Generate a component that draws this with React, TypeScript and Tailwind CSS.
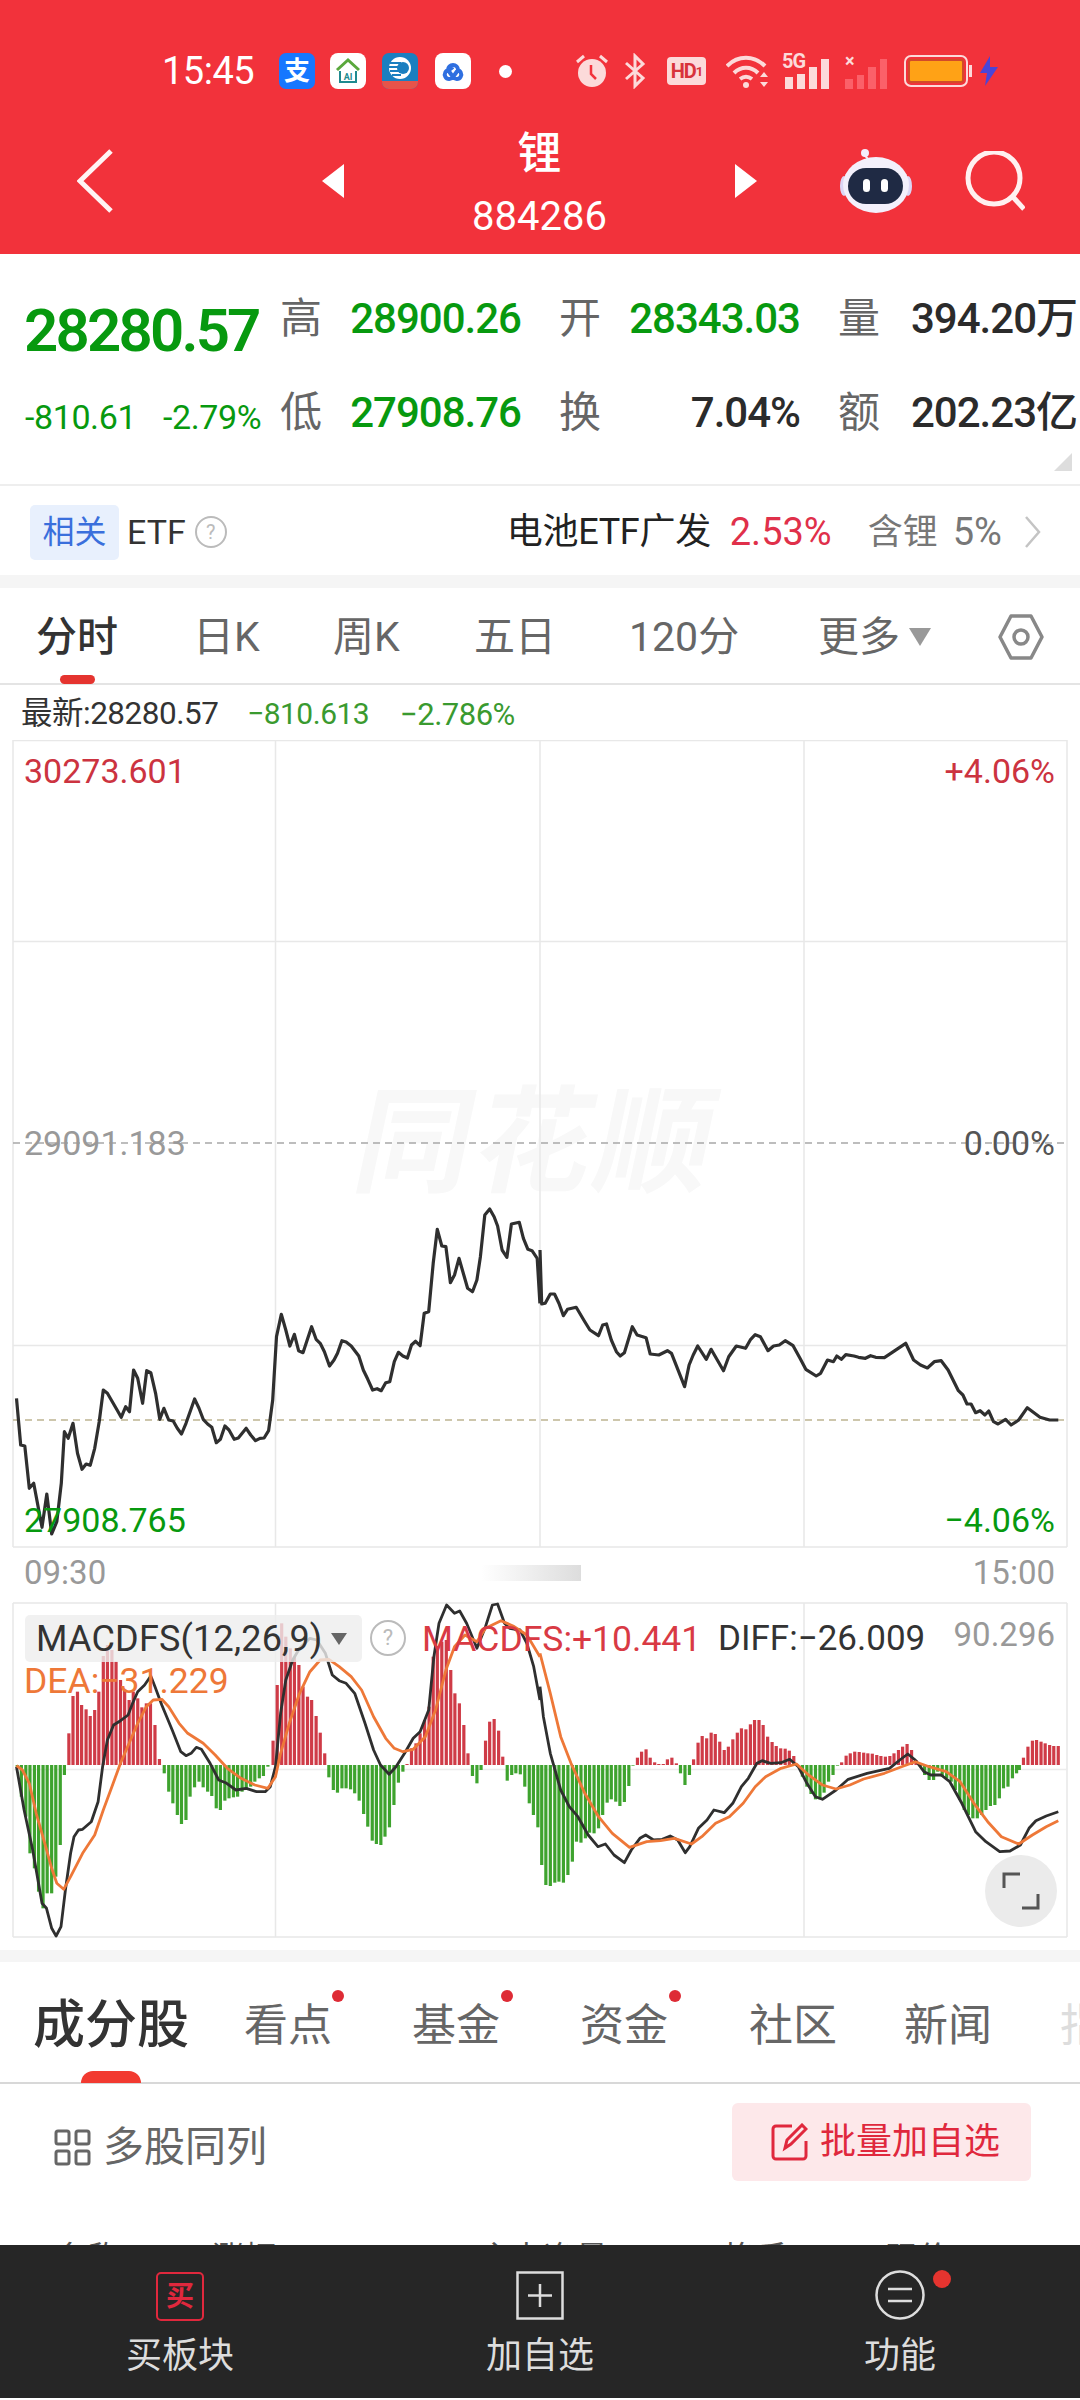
import React from "react";

const RED = "#f2323b";

// traced from the reference, in crop coordinates (x scale 2.904, y scale 3)
const priceA = [48,895,60,1035,72,1038,85,1165,98,1150,122,1282,136,1182,150,1302,165,1265,178,1150,187,995,198,1015,212,970,225,1060,238,1108,250,1092,262,1096,275,1045,288,965,300,870,312,880,340,930,352,952,365,920,376,935,388,810,400,835,414,910,426,812,438,818,452,880,464,958,476,925,490,960,503,963,515,985,527,1002,540,970,565,897,578,925,590,958,603,972,615,982,628,1028,640,1018,653,978,665,990,680,1018,692,1014,715,985,728,1005,742,1022,755,1015,767,1014,780,992,792,900,803,710,817,643,830,690,842,738,855,703,867,752,880,758,892,720,905,680,918,718,930,730,942,755,957,798,970,780,980,760,993,722,1005,726,1020,738,1042,768,1055,810,1068,838,1082,870,1095,866,1107,872,1120,848,1132,845,1145,785,1157,757,1170,768,1183,774,1195,735,1207,724,1220,737,1232,640,1245,635,1258,490,1270,388,1283,438,1295,440,1308,548,1320,525,1333,475,1347,525,1358,565,1372,575,1385,540,1395,470,1408,345,1422,327,1435,350,1445,378,1458,450,1472,472,1485,372,1508,367,1520,415,1533,448,1545,452,1560,475,1568,610];
const priceB = [5,612,15,610,30,582,42,582,55,610,68,647,80,628,105,622,130,665,145,690,170,707,182,675,193,672,207,720,222,755,233,768,245,758,268,680,282,705,308,713,320,762,345,765,370,752,382,760,420,860,433,795,445,765,458,738,483,778,497,748,533,812,548,770,570,738,597,745,612,718,625,704,640,710,662,752,678,738,695,735,712,722,735,737,755,775,772,808,802,828,815,820,835,780,852,785,862,768,875,778,888,764,912,768,925,772,945,775,960,767,975,772,1000,773,1062,730,1085,780,1105,795,1125,804,1145,785,1165,782,1185,810,1215,872,1228,885,1240,912,1252,912,1265,938,1278,932,1292,945,1303,933,1317,965,1330,972,1352,958,1368,975,1390,960,1415,923,1452,952,1480,960,1505,960];

const diffA = [48,530,70,660,95,780,122,940,135,955,150,1015,163,1038,177,1010,190,900,205,790,215,740,228,720,240,718,265,695,285,635,298,530,312,450,330,405,350,392,372,375,385,340,400,305,420,285,438,258,450,290,470,345,500,420,525,485,540,497,555,490,570,472,585,478,610,520,635,570,655,578,685,600,715,595,745,605,770,605,785,590,800,530,815,370,830,270,850,210,870,175,900,145,920,150,945,190,965,255,985,272,1005,280,1030,310,1060,400,1085,480,1105,525,1130,553,1150,530,1175,490,1200,445,1220,425,1245,360,1260,200,1275,100,1297,45,1320,70,1335,63,1355,100,1385,175,1410,110,1430,45,1445,42,1465,100,1480,115,1510,120,1530,160,1550,230,1568,330];
const diffB = [10,380,30,490,60,600,85,650,110,680,140,735,168,770,190,762,215,795,245,818,265,780,290,745,307,735,330,750,355,748,378,738,400,750,422,788,435,770,460,715,485,690,505,660,535,668,560,640,585,590,605,565,630,520,645,512,670,520,700,518,725,508,750,530,775,580,800,620,820,628,860,600,895,568,950,550,985,542,1015,535,1045,510,1068,492,1090,510,1115,545,1135,555,1165,555,1190,575,1225,640,1265,725,1295,755,1335,785,1365,783,1395,765,1420,715,1440,692,1470,678,1505,665];
const deaA = [48,527,65,540,85,580,105,670,130,760,150,835,165,880,185,898,205,860,240,790,275,735,300,660,325,590,350,520,375,460,400,400,425,350,445,330,470,328,490,350,520,400,545,430,590,460,625,495,660,535,700,565,740,585,778,595,800,560,815,490,840,400,870,310,900,245,930,210,955,208,985,230,1020,260,1050,300,1085,380,1120,445,1145,475,1170,485,1200,478,1235,440,1265,360,1295,240,1320,170,1350,135,1385,155,1410,115,1455,92,1490,108,1530,135,1568,200];
const deaB = [30,310,60,440,90,520,130,610,170,680,210,730,260,772,310,755,350,752,390,745,440,762,470,740,510,700,550,680,590,640,625,590,655,560,700,535,745,522,780,555,820,585,860,597,900,585,940,567,1000,550,1050,530,1090,515,1130,530,1180,545,1220,575,1260,640,1300,695,1340,740,1390,762,1430,735,1470,710,1505,692];

const barsA = [50,530,62,620,75,680,87,790,100,835,112,905,125,955,137,910,150,910,162,860,175,765,187,555,200,430,212,318,225,305,237,345,250,358,262,378,275,360,287,305,300,198,312,165,325,180,337,215,350,270,362,298,375,330,387,305,400,325,412,352,425,340,437,340,450,405,463,507,477,550,490,605,502,640,515,675,527,702,540,690,552,620,565,592,578,575,590,592,603,605,615,618,628,655,640,660,653,632,665,625,678,622,690,620,703,605,715,595,728,590,740,575,753,565,765,558,778,530,793,452,805,285,818,100,830,140,843,175,855,200,868,225,880,290,893,320,905,330,918,378,930,428,943,490,955,562,968,600,980,608,993,595,1005,595,1018,598,1030,610,1043,632,1056,672,1068,710,1081,752,1093,762,1106,765,1118,740,1131,712,1144,645,1157,578,1170,545,1182,522,1195,475,1208,460,1220,430,1233,390,1246,350,1258,200,1270,170,1283,155,1296,150,1309,240,1321,310,1334,340,1347,405,1359,490,1372,558,1385,580,1397,540,1410,452,1422,395,1435,387,1448,422,1460,500,1473,572,1486,555,1498,550,1511,553,1524,590,1537,640,1549,675,1562,712];
const barsB = [5,825,17,885,30,888,43,878,55,875,68,878,81,855,94,815,106,755,119,758,132,745,144,728,157,730,170,715,182,675,195,638,207,628,220,635,232,648,245,636,258,588,270,527,283,503,295,485,308,478,320,503,333,517,345,522,358,522,370,508,383,503,396,520,408,550,421,585,434,555,446,508,459,458,471,438,484,445,497,428,509,432,522,455,535,480,547,470,560,448,573,428,585,415,598,418,611,403,623,390,636,390,648,405,661,440,674,456,686,468,699,475,712,476,724,482,737,498,762,560,775,590,787,612,800,628,813,628,825,608,838,575,851,555,864,527,876,517,889,497,901,490,914,485,927,486,940,488,952,490,965,491,978,495,990,498,1003,500,1016,498,1028,490,1041,480,1053,470,1066,462,1079,480,1092,510,1105,530,1117,555,1130,570,1143,570,1155,545,1168,560,1181,565,1194,575,1206,600,1219,630,1232,660,1244,675,1257,685,1270,685,1283,675,1295,660,1308,648,1321,645,1334,625,1346,595,1359,590,1372,565,1384,550,1392,540,1404,503,1417,470,1430,452,1442,450,1455,455,1467,460,1480,465,1492,468,1505,468];

const toPoints = (a: number[], ox: number, oy: number) => {
  const out: string[] = [];
  for (let i = 0; i < a.length; i += 2) {
    out.push(`${(ox + a[i] / 2.904).toFixed(1)},${(oy + a[i + 1] / 3).toFixed(1)}`);
  }
  return out.join(" ");
};

const toBars = (a: number[], ox: number) => {
  const out: { x: number; y: number; h: number; up: boolean }[] = [];
  for (let i = 0; i < a.length; i += 2) {
    const up = a[i + 1] < 525;
    const h = Math.abs(a[i + 1] - 525) / 3;
    out.push({ x: ox + a[i] / 2.904 - 1.6, y: up ? 1590 + a[i + 1] / 3 : 1765, h, up });
  }
  return out;
};

const bars = [...toBars(barsA, 0), ...toBars(barsB, 540)];

const StatusBar = () => (
  <div className="flex h-[36px] items-center pl-[162px] text-white">
    <span className="w-[117px] text-[38px] leading-none tracking-[-0.5px]">15:45</span>
    <div className="flex h-[36px] w-[36px] items-center justify-center rounded-[7px] bg-[#1677ff] text-[26px] leading-none font-bold">支</div>
    <div className="ml-[15px] flex h-[36px] w-[36px] items-center justify-center rounded-[8px] bg-white">
      <svg width="28" height="28" viewBox="0 0 28 28" fill="none">
        <path d="M3 13 14 3l11 10" stroke="#5aa83c" strokeWidth="3" />
        <path d="M6 14v11h16V14" stroke="#1f8a8f" strokeWidth="2" />
        <text x="14" y="23" textAnchor="middle" fontSize="9" fontWeight="700" fill="#1f8a8f">AI</text>
      </svg>
    </div>
    <div className="ml-[16px] flex h-[36px] w-[36px] flex-col items-center justify-start overflow-hidden rounded-[7px] bg-[#1b7fc0]">
      <svg width="26" height="26" viewBox="0 0 26 26" className="mt-[2px]">
        <circle cx="13" cy="13" r="11" fill="#fff" />
        <path d="M3 8h11M2 12h12M3 16h11M5 20h9" stroke="#1b7fc0" strokeWidth="2" />
        <circle cx="16" cy="13" r="6" fill="#1b7fc0" />
      </svg>
      <div className="h-[8px] w-full bg-[#e8534a]" />
    </div>
    <div className="ml-[17px] flex h-[36px] w-[36px] items-center justify-center rounded-[8px] bg-white">
      <svg width="30" height="22" viewBox="0 0 30 22" fill="none" stroke="#2f6fe0" strokeWidth="4">
        <path d="M15 5a5 5 0 0 1 5 5l-5 7a4.500 4.500 0 1 1-4-7l4-3M15 5a5 5 0 0 0-5 5l5 7a4.500 4.500 0 1 0 4-7" />
      </svg>
    </div>
    <div className="ml-[28px] h-[13px] w-[13px] rounded-full bg-white" />

    <svg width="36" height="36" viewBox="0 0 36 36" className="ml-[62px]" fill="#fcdada">
      <path d="M3 9 10 3M33 9 26 3" stroke="#fcdada" strokeWidth="3" />
      <circle cx="18" cy="20" r="14" />
      <path d="M17 12v9l5 5" stroke={RED} strokeWidth="2.500" fill="none" />
    </svg>
    <svg width="24" height="36" viewBox="0 0 24 36" className="ml-[13px]" fill="none" stroke="#fcdada" strokeWidth="3">
      <path d="M3 10 20 25l-8 8V3l8 8L3 26" />
    </svg>
    <div className="ml-[20px] flex h-[28px] w-[39px] items-center justify-center rounded-[4px] bg-[#fcdada] text-[20px] leading-none font-bold tracking-[-1px] text-[#d8333b]">HD<span className="text-[13px]">1</span></div>
    <svg width="42" height="36" viewBox="0 0 42 36" className="ml-[20px]" fill="none" stroke="#fcdada" strokeWidth="4">
      <path d="M1 13c11-11 27-11 38 0M8 20c7-7 17-7 24 0M14 26c4-3 8-3 12 0" />
      <circle cx="20" cy="32" r="3" fill="#fcdada" stroke="none" />
      <path d="M34 24l4-5 4 5zM34 29l4 5 4-5z" fill="#fcdada" stroke="none" />
    </svg>
    <div className="relative ml-[14px] flex h-[36px] w-[47px] items-end gap-[4px] pl-[3px]">
      <span className="absolute -top-[2px] left-0 text-[20px] leading-none font-bold tracking-[-1px] text-[#fcdada]">5G</span>
      <div className="h-[12px] w-[8px] bg-[#fcdada]" />
      <div className="h-[15px] w-[8px] bg-[#fcdada]" />
      <div className="h-[22px] w-[8px] bg-[#fcdada]" />
      <div className="h-[30px] w-[8px] bg-[#fcdada]" />
    </div>
    <div className="relative ml-[16px] flex h-[36px] w-[42px] items-end gap-[4px]">
      <span className="absolute -top-[1px] left-[0px] text-[18px] leading-none font-bold text-[#fcdada]">×</span>
      <div className="h-[10px] w-[8px] bg-[#fb6069]" />
      <div className="h-[14px] w-[8px] bg-[#fb6069]" />
      <div className="h-[22px] w-[8px] bg-[#fb6069]" />
      <div className="h-[30px] w-[8px] bg-[#fb6069]" />
    </div>
    <div className="ml-[17px] flex items-center">
      <div className="h-[32px] w-[64px] rounded-[7px] border-[2px] border-[#fcdada] p-[2px]">
        <div className="h-full w-full rounded-[3px] border-[2px] border-[#d24a2a] bg-[#ffa216]" />
      </div>
      <div className="ml-[1px] h-[12px] w-[3px] bg-[#fcdada]" />
    </div>
    <svg width="20" height="32" viewBox="0 0 20 32" className="ml-[7px]" fill="#4a45d8">
      <path d="M11 1 1 18h7l-2 13L19 12h-8z" />
    </svg>
  </div>
);

const NavRow = () => (
  <div className="mt-[36px] flex h-[112px] items-center text-white">
    <svg width="36" height="64" viewBox="0 0 36 64" className="ml-[77px]" fill="none" stroke="#fff4f4" strokeWidth="5">
      <path d="M34 2 3 32l31 30" />
    </svg>
    <svg width="22" height="34" viewBox="0 0 22 34" className="ml-[209px]" fill="#fff">
      <path d="M22 0v34L0 17z" />
    </svg>
    <div className="flex w-[391px] flex-col items-center pt-[4px]">
      <span className="text-[44px] leading-[50px] font-medium">锂</span>
      <span className="mt-[17px] text-[40px] leading-[42px]">884286</span>
    </div>
    <svg width="22" height="34" viewBox="0 0 22 34" fill="#fff">
      <path d="M0 0v34l22-17z" />
    </svg>
    <svg width="72" height="66" viewBox="0 0 72 66" className="ml-[83px]">
      <path d="M30 14c-2-5-6-5-6-9" stroke="#f4ecfa" strokeWidth="2" fill="none" />
      <circle cx="25" cy="5" r="4" fill="#f4ecfa" />
      <ellipse cx="4" cy="38" rx="4" ry="10" fill="#dcd6f4" />
      <ellipse cx="68" cy="38" rx="4" ry="10" fill="#dcd6f4" />
      <ellipse cx="36" cy="37" rx="33" ry="28" fill="#f3f0fb" />
      <rect x="8" y="20" width="55" height="36" rx="18" fill="#1f2a44" />
      <rect x="23" y="31" width="7" height="13" rx="3.500" fill="#fff" />
      <rect x="41" y="31" width="7" height="13" rx="3.500" fill="#fff" />
    </svg>
    <svg width="60" height="60" viewBox="0 0 60 60" className="ml-[53px]" fill="none" stroke="#fff0f0" strokeWidth="5">
      <circle cx="29" cy="27" r="26" />
      <path d="M48 46l11 12" />
    </svg>
  </div>
);

const Cell = ({ label, value, cls, wide }: { label: string; value: string; cls: string; wide?: boolean }) => (
  <div className={wide ? "flex w-[241px] items-center" : "flex w-[279px] items-center"}>
    <span className="w-[42px] shrink-0 text-[42px] leading-none text-[#666666]">{label}</span>
    {wide ? (
      <span className={`ml-[31px] text-[42px] leading-none tracking-[-1px] whitespace-nowrap font-medium ${cls}`}>{value}</span>
    ) : (
      <span className={`w-[199px] shrink-0 text-right text-[42px] leading-none tracking-[-1px] font-medium ${cls}`}>{value}</span>
    )}
  </div>
);

const Quote = () => (
  <div className="relative flex h-[232px] border-b-2 border-[#eeeeee] bg-white">
    <div className="w-[280px] shrink-0 pt-[46px] pl-[24px]">
      <div className="text-[60px] leading-[62px] font-semibold tracking-[-2.800px] text-[#07990f]">28280.57</div>
      <div className="mt-[37px] flex pl-[1px] text-[34px] leading-[36px] tracking-[-0.4px] text-[#07990f]">
        <span className="w-[138px]">-810.61</span>
        <span>-2.79%</span>
      </div>
    </div>
    <div className="pt-[18px]">
      <div className="flex h-[94px] items-center">
        <Cell label="高" value="28900.26" cls="text-[#07990f]" />
        <Cell label="开" value="28343.03" cls="text-[#07990f]" />
        <Cell label="量" value="394.20万" cls="text-[#2b2b2b]" wide />
      </div>
      <div className="flex h-[94px] items-center">
        <Cell label="低" value="27908.76" cls="text-[#07990f]" />
        <Cell label="换" value="7.04%" cls="text-[#2b2b2b]" />
        <Cell label="额" value="202.23亿" cls="text-[#2b2b2b]" wide />
      </div>
    </div>
    <svg width="18" height="18" viewBox="0 0 18 18" className="absolute top-[199px] right-[8px]" fill="#dddddd">
      <path d="M18 0v18H0z" />
    </svg>
  </div>
);

const EtfRow = () => (
  <div className="flex h-[89px] items-center bg-white pt-[3px]">
    <span className="ml-[30px] flex h-[55px] w-[89px] items-center justify-center rounded-[5px] bg-[#e8f0fd] text-[32px] leading-none text-[#3a6fdc]">相关</span>
    <span className="ml-[8px] text-[34px] leading-none text-[#333333]">ETF</span>
    <span className="ml-[9px] flex h-[32px] w-[32px] items-center justify-center rounded-full border-2 border-[#bbbbbb] text-[20px] leading-none text-[#bbbbbb]">?</span>
    <span className="ml-[280px] w-[223px] shrink-0 text-[36px] leading-none tracking-[-0.3px] whitespace-nowrap text-[#222222]">电池ETF广发</span>
    <span className="w-[138px] shrink-0 text-[38px] leading-none text-[#e0304a]">2.53%</span>
    <span className="w-[85px] shrink-0 text-[35px] leading-none text-[#777777]">含锂</span>
    <span className="w-[71px] shrink-0 text-[38px] leading-none text-[#777777]">5%</span>
    <svg width="17" height="34" viewBox="0 0 17 34" fill="none" stroke="#c4c4c4" strokeWidth="2.500">
      <path d="M2 2l13 15L2 32" />
    </svg>
  </div>
);

const PeriodTabs = () => (
  <div className="relative flex h-[97px] items-center border-b-2 border-[#e4e4e4] bg-white pt-[3px] pl-[36px] text-[41px] leading-none text-[#666666]">
    <span className="w-[157px] shrink-0 text-[41px] font-medium text-[#333333]">分时</span>
    <span className="w-[140px] shrink-0">日K</span>
    <span className="w-[141px] shrink-0">周K</span>
    <span className="w-[155px] shrink-0">五日</span>
    <span className="w-[189px] shrink-0">120分</span>
    <span className="w-[91px] shrink-0">更多</span>
    <svg width="22" height="18" viewBox="0 0 22 18" fill="#999999">
      <path d="M0 0h22L11 18z" />
    </svg>
    <svg width="48" height="48" viewBox="0 0 48 48" className="ml-[66px]" fill="none" stroke="#888888" strokeWidth="3.500">
      <path d="M14 3h20l11 21-11 21H14L3 24z" strokeLinejoin="round" />
      <circle cx="24" cy="24" r="7" />
    </svg>
    <div className="absolute bottom-[-1px] left-[60px] h-[9px] w-[35px] rounded-full bg-[#e5342f]" />
  </div>
);

const PriceChart = () => (
  <div className="relative h-[808px] bg-white">
    <div className="absolute top-[338px] left-[358px] -skew-x-12 text-[116px] leading-[130px] font-bold tracking-[4px] whitespace-nowrap text-[#f8f8f8]">同花顺</div>
    <svg viewBox="0 740 1080 808" className="absolute inset-0 h-full w-full" fill="none">
      <path d="M13 740.500H1067M13 941.500H1067M13 1345.500H1067M13 1547H1067M13 740V1547M1067 740V1547M275.500 740V1547M540 740V1547M804 740V1547" stroke="#e8e8e8" strokeWidth="1.500" />
      <path d="M13 1143H1067" stroke="#a8a8a8" strokeWidth="1.500" strokeDasharray="7 5" />
      <path d="M13 1420H1067" stroke="#bdb491" strokeWidth="1.500" strokeDasharray="7 5" />
      <polyline points={toPoints(priceA, 0, 1100)} stroke="#2f2f2f" strokeWidth="3.200" strokeLinejoin="round" />
      <polyline points={toPoints([0, 450, ...priceB], 540, 1100)} stroke="#2f2f2f" strokeWidth="3.200" strokeLinejoin="round" />
    </svg>
    <span className="absolute top-[11px] left-[24px] text-[34px] leading-[40px] text-[#cc3340]">30273.601</span>
    <span className="absolute top-[11px] right-[25px] text-[34px] leading-[40px] text-[#cc3340]">+4.06%</span>
    <span className="absolute top-[383px] left-[24px] text-[34px] leading-[40px] text-[#999999]">29091.183</span>
    <span className="absolute top-[383px] right-[25px] text-[34px] leading-[40px] text-[#555555]">0.00%</span>
    <span className="absolute top-[760px] left-[24px] text-[34px] leading-[40px] text-[#07990f]">27908.765</span>
    <span className="absolute top-[760px] right-[25px] text-[34px] leading-[40px] text-[#07990f]">−4.06%</span>
  </div>
);

const MacdChart = () => (
  <div className="relative h-[336px] bg-white">
    <svg viewBox="0 1602 1080 336" className="absolute inset-0 h-full w-full" fill="none">
      <path d="M13 1603H1067M13 1937H1067M13 1603V1937M1067 1603V1937M275.500 1603V1937M804 1603V1937" stroke="#e8e8e8" strokeWidth="1.500" />
      <path d="M13 1769.500H1067" stroke="#ececec" strokeWidth="1.500" />
      {bars.map((b, i) => (
        <rect key={i} x={b.x} y={b.y} width="3.200" height={b.h} fill={b.up ? "#cf3b47" : "#3ea32e"} />
      ))}
      <polyline points={toPoints(diffA, 0, 1590)} stroke="#2f2f2f" strokeWidth="2.800" strokeLinejoin="round" />
      <polyline points={toPoints([0, 290, ...diffB], 540, 1590)} stroke="#2f2f2f" strokeWidth="2.800" strokeLinejoin="round" />
      <polyline points={toPoints(deaA, 0, 1590)} stroke="#ee7838" strokeWidth="2.800" strokeLinejoin="round" />
      <polyline points={toPoints([0, 190, ...deaB], 540, 1590)} stroke="#ee7838" strokeWidth="2.800" strokeLinejoin="round" />
    </svg>
    <div className="absolute top-[13px] left-[25px] flex h-[47px] w-[337px] items-center rounded-[5px] bg-[#eeeeee]/80 pl-[11px] text-[36px] leading-none text-[#333333]">
      <span className="w-[295px] shrink-0 tracking-[0.2px] whitespace-nowrap">MACDFS(12,26,9)</span>
      <svg width="16" height="12" viewBox="0 0 16 12" fill="#666666">
        <path d="M0 0h16L8 12z" />
      </svg>
    </div>
    <span className="absolute top-[18px] left-[370px] flex h-[36px] w-[36px] items-center justify-center rounded-full border-2 border-[#bbbbbb] text-[22px] leading-none text-[#bbbbbb]">?</span>
    <span className="absolute top-[17px] left-[422px] text-[35.500px] leading-[40px] text-[#d93a44]">MACDFS:+10.441</span>
    <span className="absolute top-[17px] left-[718px] text-[35px] leading-[40px] text-[#333333]">DIFF:−26.009</span>
    <span className="absolute top-[13px] right-[25px] text-[33px] leading-[40px] text-[#999999]">90.296</span>
    <span className="absolute top-[59px] left-[24px] text-[35.500px] leading-[40px] text-[#ee7838]">DEA:−31.229</span>
    <div className="absolute top-[253px] left-[985px] flex h-[72px] w-[72px] items-center justify-center rounded-full bg-[#ebebeb]">
      <svg width="38" height="38" viewBox="0 0 38 38" fill="none" stroke="#555555" strokeWidth="3">
        <path d="M2 16V2h16M36 22v14H20" />
      </svg>
    </div>
  </div>
);

const SectionTabs = () => (
  <div className="relative flex h-[122px] items-center border-b-2 border-[#d8d8d8] bg-white pt-[7px] pl-[33px] text-[44px] leading-none text-[#666666]">
    <span className="w-[211px] shrink-0 text-[52px] font-medium text-[#333333]">成分股</span>
    <span className="relative w-[168px] shrink-0">看点<span className="absolute -top-[14px] left-[88px] h-[12px] w-[12px] rounded-full bg-[#de2b35]" /></span>
    <span className="relative w-[168px] shrink-0">基金<span className="absolute -top-[14px] left-[89px] h-[12px] w-[12px] rounded-full bg-[#de2b35]" /></span>
    <span className="relative w-[169px] shrink-0">资金<span className="absolute -top-[14px] left-[89px] h-[12px] w-[12px] rounded-full bg-[#de2b35]" /></span>
    <span className="w-[155px] shrink-0">社区</span>
    <span className="w-[156px] shrink-0">新闻</span>
    <span className="shrink-0 text-[#dddddd]">指数</span>
    <div className="absolute bottom-[-1px] left-[81px] h-[12px] w-[60px] rounded-t-full rounded-b-[4px] bg-[#f23a30]" />
  </div>
);

const ListHead = () => (
  <div className="h-[161px] overflow-hidden bg-white">
    <div className="flex h-[115px] items-center pl-[54px]">
      <svg width="37" height="37" viewBox="0 0 37 37" className="mt-[11px]" fill="none" stroke="#666666" strokeWidth="3">
        <rect x="2" y="2" width="13" height="13" rx="2" />
        <rect x="22" y="2" width="13" height="13" rx="2" />
        <rect x="2" y="22" width="13" height="13" rx="2" />
        <rect x="22" y="22" width="13" height="13" rx="2" />
      </svg>
      <span className="mt-[11px] ml-[12px] w-[629px] shrink-0 text-[41px] leading-none text-[#666666]">多股同列</span>
      <div className="flex h-[78px] w-[299px] items-center rounded-[6px] bg-[#fde8ea] pl-[39px] text-[36px] leading-none text-[#e0283d]">
        <svg width="37" height="38" viewBox="0 0 37 38" fill="none" stroke="#e0283d" strokeWidth="3">
          <path d="M21 3H5a3 3 0 0 0-3 3v27a3 3 0 0 0 3 3h27a3 3 0 0 0 3-3V18" />
          <path d="M14 25l2-8L31 2l4 4-15 15z" />
        </svg>
        <span className="ml-[12px]">批量加自选</span>
      </div>
    </div>
    <div className="mt-[43px] flex pl-[56px] text-[32px] leading-none text-[#555555]">
      <span className="w-[156px] shrink-0">名称</span>
      <span className="w-[268px] shrink-0">涨幅</span>
      <span className="w-[244px] shrink-0">主力净量</span>
      <span className="w-[162px] shrink-0">换手</span>
      <span className="shrink-0">现价</span>
    </div>
  </div>
);

const BottomBar = () => (
  <div className="flex h-[153px] bg-[#262626]">
    <div className="flex w-[360px] flex-col items-center pt-[27px]">
      <div className="flex h-[49px] w-[48px] items-center justify-center rounded-[5px] border-2 border-[#e0283d] text-[28px] leading-none font-bold text-[#e0283d]">买</div>
      <span className="mt-[15px] text-[36px] leading-[40px] text-[#dddddd]">买板块</span>
    </div>
    <div className="flex w-[360px] flex-col items-center pt-[26px]">
      <svg width="48" height="49" viewBox="0 0 48 49" fill="none" stroke="#dddddd" strokeWidth="2.500">
        <rect x="1.500" y="1.500" width="45" height="46" />
        <path d="M24 13v23M12 24.500h24" />
      </svg>
      <span className="mt-[16px] text-[36px] leading-[40px] text-[#dddddd]">加自选</span>
    </div>
    <div className="relative flex w-[360px] flex-col items-center pt-[25px]">
      <svg width="50" height="50" viewBox="0 0 50 50" fill="none" stroke="#dddddd" strokeWidth="2.500">
        <circle cx="25" cy="25" r="23.500" />
        <path d="M13 19h24M13 31h24" />
      </svg>
      <span className="mt-[16px] text-[36px] leading-[40px] text-[#dddddd]">功能</span>
      <div className="absolute top-[25px] left-[213px] h-[18px] w-[18px] rounded-full bg-[#e5342f]" />
    </div>
  </div>
);

export default function App() {
  return (
    <div className="h-[2400px] w-[1080px] overflow-hidden bg-white font-['Roboto','Noto_Sans_CJK_SC',sans-serif]">
      <div className="h-[254px] bg-[#f2323b] pt-[53px]">
        <StatusBar />
        <NavRow />
      </div>
      <Quote />
      <EtfRow />
      <div className="h-[13px] bg-[#f5f5f5]" />
      <PeriodTabs />
      <div className="flex h-[55px] items-center bg-white pt-[3px] pl-[21px] leading-none">
        <span className="w-[226px] shrink-0 text-[31.500px] tracking-[-0.5px] whitespace-nowrap text-[#333333]">最新:28280.57</span>
        <span className="w-[153px] shrink-0 text-[30px] tracking-[-0.5px] text-[#3a9a2f]">−810.613</span>
        <span className="text-[31px] tracking-[-0.5px] text-[#3a9a2f]">−2.786%</span>
      </div>
      <PriceChart />
      <div className="flex h-[54px] items-center justify-between bg-white pr-[25px] pb-[5px] pl-[24px] text-[33px] leading-none text-[#999999]">
        <span>09:30</span>
        <div className="mr-[18px] h-[16px] w-[100px] bg-gradient-to-r from-white to-[#dddddd]" />
        <span>15:00</span>
      </div>
      <MacdChart />
      <div className="h-[12px] bg-white" />
      <div className="h-[12px] bg-[#f5f5f5]" />
      <SectionTabs />
      <ListHead />
      <BottomBar />
    </div>
  );
}
